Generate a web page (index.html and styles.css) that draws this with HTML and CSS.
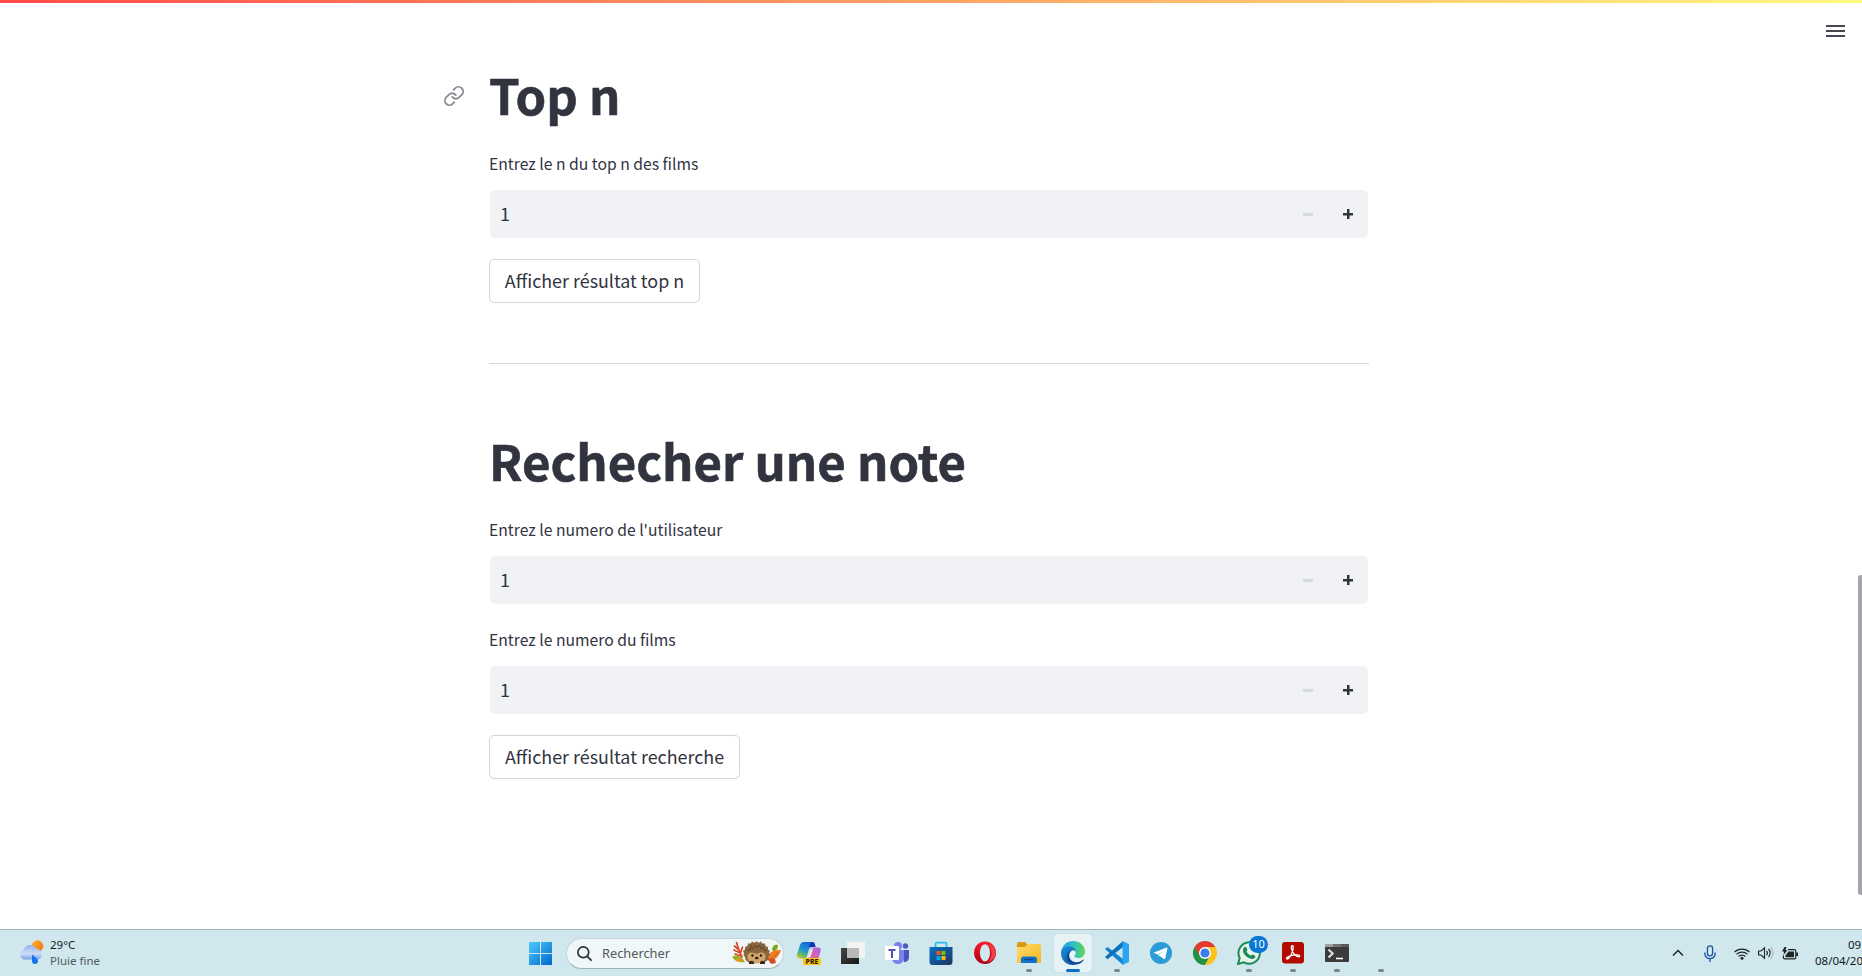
FILE: index.html
```html
<!DOCTYPE html>
<html lang="fr">
<head>
<meta charset="utf-8">
<title>Films</title>
<link rel="stylesheet" href="styles.css">
</head>
<body>
<div class="decoration"></div>
<main class="page">
  <section class="block">
    <h1 class="title">
      <svg class="anchor" viewBox="0 0 24 24" fill="none" stroke="#8b8c94" stroke-width="2" stroke-linecap="round" stroke-linejoin="round"><path d="M10 13a5 5 0 0 0 7.54.54l3-3a5 5 0 0 0-7.07-7.07l-1.72 1.71"/><path d="M14 11a5 5 0 0 0-7.54-.54l-3 3a5 5 0 0 0 7.07 7.07l1.71-1.71"/></svg>
      <span>Top n</span>
    </h1>
    <div class="label"><span>Entrez le n du top n des films</span></div>
    <div class="number"><span class="value">1</span><span class="minus"></span><span class="plus"></span></div>
    <div class="button b-top"><span>Afficher résultat top n</span></div>
  </section>
  <div class="divider"></div>
  <section class="block">
    <h1 class="title"><span>Rechecher une note</span></h1>
    <div class="label"><span>Entrez le numero de l'utilisateur</span></div>
    <div class="number"><span class="value">1</span><span class="minus"></span><span class="plus"></span></div>
    <div class="label second"><span>Entrez le numero du films</span></div>
    <div class="number"><span class="value">1</span><span class="minus"></span><span class="plus"></span></div>
    <div class="button b-search"><span>Afficher résultat recherche</span></div>
  </section>
</main>
<div class="menu"><i></i><i></i><i></i></div>
<div class="scrollbar"></div>

<footer class="taskbar">
  <div class="weather">
    <svg width="25" height="24" viewBox="0 0 25 24">
      <defs>
        <linearGradient id="cloud" x1="0" y1="0" x2="0" y2="1"><stop offset="0" stop-color="#8fb3ea"/><stop offset=".6" stop-color="#cfdcf6"/><stop offset="1" stop-color="#7ba2e6"/></linearGradient>
        <linearGradient id="sun" x1="0" y1="0" x2="1" y2="1"><stop offset="0" stop-color="#ffb52c"/><stop offset="1" stop-color="#f26b15"/></linearGradient>
      </defs>
      <circle cx="18.500" cy="6" r="5.800" fill="url(#sun)"/>
      <path d="M5 19.500A5 5 0 0 1 4.500 10 7 7 0 0 1 17.500 9a5.400 5.400 0 0 1 1.500 10.500z" fill="url(#cloud)"/>
      <path d="M13 14.500c2 2 6 3.800 6 6.500a3 3 0 0 1-6 0z" fill="#1673ea"/>
    </svg>
    <div class="weather-text"><span class="deg">29°C</span><span class="cond">Pluie fine</span></div>
  </div>
  <svg class="start" width="23" height="23" viewBox="0 0 23 23"><defs><linearGradient id="win" x1="0" y1="0" x2="1" y2="1"><stop offset="0" stop-color="#4dcafa"/><stop offset="1" stop-color="#0067cf"/></linearGradient></defs><path fill="url(#win)" d="M0 0h11v11H0zM12 0h11v11H12zM0 12h11v11H0zM12 12h11v11H12z"/></svg>
  <div class="search">
    <svg width="15" height="15" viewBox="0 0 15 15" fill="none" stroke="#2b3033" stroke-width="1.700" stroke-linecap="round"><circle cx="6.300" cy="6.300" r="5.400"/><path d="M10.300 10.300l3.700 3.900"/></svg>
    <span class="search-text">Rechercher</span>
    <svg class="hedgehog" width="50" height="24" viewBox="0 0 50 24">
      <path d="M10 16C8 12 6 7 4.500 1.500M8 12L2 9M7 9L2.500 5M8.500 12l2-6M9 15l-6-2" stroke="#d9482b" stroke-width="1.700" stroke-linecap="round" fill="none"/>
      <path d="M0 16c4-3 8-1 11 2l2 3c-5 1-9 0-13-5z" fill="#9aad24"/><path d="M3 19c4-3 7-1 9 1l-5 1z" fill="#e39a20"/>
      <path d="M40 8c1-4 3-5 6-4 0 4-2 6-5 7z" fill="#84a61f"/><path d="M36 18c0-7 5-9 13-9-2 6-5 10-11 10z" fill="#ee7f25"/><path d="M35 17l8 1 1 4-5 1z" fill="#d54e29"/><path d="M37 20l10-9" stroke="#c85b14" fill="none"/>
      <path d="M12 12l-1-2 2-1.500 0-2.500 2.500-1 .5-2.500 2.700 0 1.300-2 2.500 1.200 2-1.500 2 1.500 2.500-1.200 1.300 2 2.700 0 .5 2.500 2.500 1 0 2.500 2 1.500-1 2 1 2-1.500 2-.5 3-4.500 3H17.500l-4-3-.5-3-1.500-2z" fill="#8a673c"/>
      <path d="M15 9l2.500.5 1-3 2.500 1.500 1.500-3.500 2.500 2 2.500-2L29 8l2.500-1.500 1 3L35 9M18 4l2 1M29 5l2-1" stroke="#5d4023" stroke-width="1" fill="none"/>
      <path d="M15.500 15.500c0-3.500 3.500-5 6.500-3.500 2 1 3 1 5 0 3-1.500 6.500 0 6.500 3.500 0 4.500-3.500 7-9 7s-9-2.500-9-7z" fill="#cfa56a"/>
      <circle cx="20.500" cy="14.500" r="1.200" fill="#2a1c14"/><circle cx="29" cy="14.500" r="1.200" fill="#2a1c14"/><ellipse cx="24.700" cy="17" rx="1.800" ry="1.300" fill="#2a1c14"/><path d="M17 22c0-3 5-3 5 0v1h-5zM28 22c0-3 5-3 5 0v1h-5z" fill="#3c2620"/>
    </svg>
  </div>
  <div class="apps">
    <div class="app"><svg width="24" height="24" viewBox="0 0 24 24">
      <defs><linearGradient id="cp1" x1=".5" y1="0" x2="0" y2="1"><stop offset="0" stop-color="#1763d8"/><stop offset=".45" stop-color="#2099cf"/><stop offset=".75" stop-color="#75bd54"/><stop offset="1" stop-color="#f5c52c"/></linearGradient><linearGradient id="cp2" x1="1" y1="0" x2="0" y2="1"><stop offset="0" stop-color="#a062e8"/><stop offset=".6" stop-color="#e7659c"/><stop offset="1" stop-color="#ff7d64"/></linearGradient></defs>
      <path d="M7 1h8c2 0 2.500 1 3 3l.5 2H15c-2 0-2.700 1-3.300 3L10 15c-.6 2-1.500 2.500-3.500 2.500H3c-3 0-3.500-2-2.700-5L3 4c.7-2 2-3 4-3z" fill="url(#cp1)"/>
      <path d="M14 1h1c2 0 2.500 1 3 3l.5 2H12z" fill="#0c39a7"/>
      <path d="M16 6.500h5c3 0 3 2.500 2.300 5L21 18.500c-.7 2.500-2 4-4 4H9l4-13c.6-2 1.300-3 3-3z" fill="url(#cp2)"/><path d="M14 7.500l-3.500 9h2.700l3-9z" fill="#e9eef5"/></svg><span class="pre">PRE</span></div>
    <div class="app"><svg width="24" height="24" viewBox="0 0 24 24"><defs><linearGradient id="tv" x2="1" y2="1"><stop stop-color="#454545"/><stop offset="1" stop-color="#171717"/></linearGradient></defs><path d="M0 7h18v16H0z" fill="url(#tv)"/><path d="M6 1h18v16H6z" fill="#f1f2f2"/><path d="M6 7h12v10H6z" fill="#b8b8b8"/></svg></div>
    <div class="app"><svg width="24" height="24" viewBox="0 0 24 24"><circle cx="20.500" cy="5" r="2.700" fill="#5059c9"/><path d="M17 9h7v7c0 3-2 5-5 5z" fill="#4c54bf"/><circle cx="13" cy="5" r="4" fill="#7b83eb"/><path d="M7 9h12v8c0 4-3 6-6 6s-6-2-6-6z" fill="#7b83eb"/><path d="M14 6v13H9l-1-1z" fill="#5059c9" opacity=".6"/><rect y="5" width="14" height="14" rx="1.200" fill="#fff"/><path d="M3.500 8h7v2H8v7H6v-7H3.500z" fill="#4d54b7"/></svg></div>
    <div class="app"><svg width="24" height="24" viewBox="0 0 24 24"><defs><linearGradient id="st" x2="1" y2="1"><stop stop-color="#0872c4"/><stop offset="1" stop-color="#1d3560"/></linearGradient></defs><path d="M6.500 6V2.800c0-.7.500-1.200 1.200-1.200h8.600c.7 0 1.200.5 1.200 1.200V6" fill="none" stroke="#2bbdf3" stroke-width="1.800"/><path d="M.5 6h23v15a3 3 0 0 1-3 3h-17a3 3 0 0 1-3-3z" fill="url(#st)"/><path d="M7.500 10h4v4h-4z" fill="#f25022"/><path d="M12.500 10h4v4h-4z" fill="#7fba00"/><path d="M7.500 15h4v4h-4z" fill="#00a4ef"/><path d="M12.500 15h4v4h-4z" fill="#ffb900"/></svg></div>
    <div class="app"><svg width="24" height="24" viewBox="0 0 24 24"><defs><linearGradient id="op" x2="0" y2="1"><stop stop-color="#ff1b2d"/><stop offset="1" stop-color="#a70014"/></linearGradient></defs><path fill-rule="evenodd" d="M12 .5a11 11.300 0 1 0 0 22.600 11 11.300 0 1 0 0-22.600zm0 2.700c3 0 5 4 5 8.600s-2 8.600-5 8.600-5-4-5-8.600 2-8.600 5-8.600z" fill="url(#op)"/><path d="M14 3c3 1 4.500 5 4.500 8.800S17 20 14 21c5-.5 8.500-4 8.500-9.200S19 3.500 14 3z" fill="#f0404c"/></svg></div>
    <div class="app open"><svg width="24" height="24" viewBox="0 0 24 24"><defs><linearGradient id="ex" x2="1" y2="1"><stop stop-color="#ffdc70"/><stop offset="1" stop-color="#f6b719"/></linearGradient></defs><path d="M0 3a2 2 0 0 1 2-2h6l2.500 2.500V8H0z" fill="#db9a0c"/><path d="M0 6h8l3-3h11.500A1.500 1.500 0 0 1 24 4.500V22H0z" fill="url(#ex)"/><path d="M4 22v-4a2.500 2.500 0 0 1 2.500-2.500h11A2.500 2.500 0 0 1 20 18v4z" fill="#1374cc"/><path d="M7 18.500h10" stroke="#0a4d91" stroke-width="1.600"/></svg></div>
    <div class="app active"><svg width="24" height="24" viewBox="0 0 24 24"><defs><linearGradient id="ed1" x1="0" x2="1"><stop stop-color="#249fe1"/><stop offset=".55" stop-color="#32c1bd"/><stop offset="1" stop-color="#5fd850"/></linearGradient><linearGradient id="ed2" x2="1" y2="1"><stop stop-color="#1791df"/><stop offset="1" stop-color="#0c4b9c"/></linearGradient></defs><path d="M.5 10C1.500 4 6 0 12 0c7 0 12 5 12 10.500 0 4-3 6.500-6.500 6.500-2.500 0-4-1-4-2s1.300-1.300 1.300-3.500S12 7.500 9 7.500c-4 0-7 1-8.500 2.500z" fill="url(#ed1)"/><path d="M0 12c0-4 3.500-6.500 8-6.500 4.500 0 7 3 6.800 6-.2-1.500-1.800-2.500-3.500-2-3 1-4.500 4-3.300 7.500 1.300 3.800 5 6 9 5.300-1.500 1-3.500 1.700-5.500 1.700C5 24 0 18.600 0 12z" fill="url(#ed2)"/><path d="M10.500 9.800C7 12 7.500 18.500 12 20.500c4 1.700 8 .2 10.300-2 .4-.3.700 0 .5.500C20.500 22.500 17 24 13 23.500 8 22.500 5 18.500 6 14c.6-2.400 2.300-4 4.500-4.200z" fill="#114a8d"/></svg></div>
    <div class="app open"><svg width="24" height="24" viewBox="0 0 24 24"><path d="M0 8l2.500-2L18 18v6z" fill="#1485d1"/><path d="M0 16l2.500 2.200L18 6V0z" fill="#0a73bd"/><path d="M17.500 0L24 3v18l-6.500 3z" fill="#2ba5ef"/></svg></div>
    <div class="app"><svg width="24" height="24" viewBox="0 0 24 24"><circle cx="12" cy="12" r="11" fill="#2b9cd8"/><path d="M4.500 11.700L17.500 6.500c.7-.2 1 .1.900.8l-2.100 10c-.2.900-.7 1-1.400.6l-6.300-4.500z" fill="#fff"/><path d="M9 13.500l6-4.500-5 5.300-.3 2.700z" fill="#a9c9dd"/></svg></div>
    <div class="app"><svg width="24" height="24" viewBox="0 0 24 24"><path d="M1.600 6A12 12 0 0 0 12 24l5.200-9z" fill="#229342"/><path d="M12 24A12 12 0 0 0 22.400 6H12l5.200 9z" fill="#fcc31e"/><path d="M12 6h10.400A12 12 0 0 0 1.600 6l5.200 9z" fill="#e33b2e"/><circle cx="12" cy="12" r="6" fill="#fff"/><circle cx="12" cy="12" r="4.600" fill="#3a7df0"/></svg></div>
    <div class="app open"><svg width="24" height="24" viewBox="0 0 24 24"><path d="M1 23l1.700-6A10.700 10.700 0 1 1 7 21.400z" fill="#e6f2ed" stroke="#188c54" stroke-width="2"/><path d="M7 6.500c1-1 2-.8 2.500.2l.8 2c.2.600-.9 1.500-.7 2 1 1.900 2.300 3 4.200 3.800.6.200 1.200-1.200 1.900-1l2.300 1.200c.6.300.3 1.700-.4 2.400-1.500 1.300-3.800 1-6.300-.3-2.700-1.500-5-4.300-5.300-6.900-.1-1.300.3-2.600 1-3.400z" fill="#188c54"/></svg><span class="badge">10</span></div>
    <div class="app open"><svg width="24" height="24" viewBox="0 0 24 24"><rect x="1" y="1" width="22" height="21.500" rx="3.200" fill="#b30b00"/><path d="M5.700 17.800c-1.500-1.800 5.500-4 10.500-3.900 2.300.1 2.900 1 2 1.800-1.500 1-6.900-3.200-7.700-7.700-.3-2.300-.1-3.400.9-3.400 1.400.1.900 4.700-.9 8.400-1.700 3.400-3.800 5.700-4.800 4.800z" fill="none" stroke="#fff" stroke-width="1.300"/></svg></div>
    <div class="app open"><svg width="24" height="24" viewBox="0 0 24 24"><rect y="3" width="24" height="18" rx="1" fill="#3b3b3b"/><path d="M0 3h8v3H0z" fill="#a0a0a0"/><path d="M8 3h8v3H8z" fill="#737373"/><path d="M16 3h8v3h-8z" fill="#5a5a5a"/><path d="M3.500 8.500l4.200 4-4.200 4" stroke="#ddd" stroke-width="2.200" fill="none"/><path d="M11 17.500h7" stroke="#fff" stroke-width="1.600"/></svg></div>
    <div class="app open"></div>
  </div>
  <div class="tray">
    <svg class="chev" width="12" height="8" viewBox="0 0 12 8" fill="none" stroke="#202425" stroke-width="1.500"><path d="M1 6.500l5-5 5 5"/></svg>
    <svg class="mic" width="12" height="17" viewBox="0 0 12 17" fill="none" stroke="#1d55a5" stroke-width="1.300"><rect x="3.400" y=".8" width="5.200" height="10" rx="2.600"/><path d="M.8 7.500v1a5.200 5.200 0 0 0 10.400 0v-1M6 13.700V17"/></svg>
    <svg class="wifi" width="16" height="13" viewBox="0 0 16 13" fill="none" stroke="#202425" stroke-width="1.200"><path d="M.5 5.200a10.500 10.500 0 0 1 15 0M2.500 7.400a7.700 7.700 0 0 1 11 0M4.600 9.500a4.800 4.800 0 0 1 6.800 0"/><circle cx="8" cy="11.300" r="1.500" fill="#202425" stroke="none"/></svg>
    <svg class="vol" width="16" height="14" viewBox="0 0 16 14" fill="none" stroke="#202425" stroke-width="1.100"><path d="M.6 5h2.500L6.500 1.800v10.400L3.100 9H.6z"/><path d="M8.500 4.800a3.300 3.300 0 0 1 0 4.400M10.500 3a5.700 5.700 0 0 1 0 8"/><path d="M12.600 1a8.500 8.500 0 0 1 0 12" stroke="#a6b5b9"/></svg>
    <svg class="bat" width="16" height="13" viewBox="0 0 16 13"><path d="M6 2.700h6.500a1.300 1.300 0 0 1 1.300 1.300v6.500a1.300 1.300 0 0 1-1.300 1.300H2.700a1.300 1.300 0 0 1-1.300-1.300V8.500" fill="none" stroke="#202425" stroke-width="1.200"/><path d="M6.500 4.500H12v5.700H3.500V8.500zM14.200 5.500H16V9h-1.800zM2.500 0L0 4.500h2L1.500 8 5.500 3.200H3.500L4.500 0z" fill="#202425"/></svg>
    <div class="clock"><span class="hour">09</span><span class="date">08/04/20</span></div>
  </div>
</footer>
</body>
</html>
```
FILE: styles.css
```css
* { box-sizing: border-box; }
body {
  margin: 0;
  width: 1862px;
  height: 976px;
  overflow: hidden;
  background: #fff;
  color: #31333f;
  font-family: "Noto Sans CJK JP", "Noto Sans", sans-serif;
  display: flex;
  flex-direction: column;
}
span { white-space: nowrap; }
.decoration { height: 3px; flex: none; background: linear-gradient(90deg, #ff4b4b 0, #fffd80 1900px); }

.page { width: 880px; margin-left: 489px; flex: 1; min-height: 0; padding-top: 58px; }
.block { display: flex; flex-direction: column; }
.title { position: relative; margin: 0; height: 66px; line-height: 66px; font-size: 49.100px; font-weight: 700; -webkit-text-stroke: .6px #31333f; }
.title span { display: inline-block; }
.anchor { position: absolute; left: -46px; top: 24px; width: 22px; height: 22px; }
.label { margin-top: 24px; height: 26px; line-height: 26px; font-size: 15.700px; }
.label.second { margin-top: 23px; }
.number {
  margin: 13px 1px 0;
  height: 48px;
  border-radius: 5px;
  background: #f0f2f6;
  display: flex;
  align-items: center;
  padding: 0 15px 0 10px;
  font-size: 18px;
}
.value { flex: 1; line-height: 46px; height: 48px; }
.minus { width: 10px; height: 3px; background: #d5d9e2; margin-right: 30px; }
.plus { width: 10px; height: 10px; background: linear-gradient(#31333f, #31333f) center / 10px 2.500px no-repeat, linear-gradient(#31333f, #31333f) center / 2.500px 10px no-repeat; }
.button {
  margin-top: 21px;
  height: 44px;
  border: 1px solid #d3d4d8;
  border-radius: 5px;
  display: flex;
  align-items: center;
  justify-content: center;
  padding-bottom: 2px;
  font-size: 17.900px;
  line-height: 26px;
}
.b-top { width: 211px; }
.b-search { width: 251px; }
.divider { height: 1px; background: #d6d6d9; margin: 60px 0 63px; }

.menu { position: absolute; left: 1826px; top: 25px; width: 19px; display: grid; gap: 3px; }
.menu i { height: 2px; background: #454752; }
.scrollbar { position: absolute; right: 0; top: 575px; width: 4px; height: 320px; background: #a5a5a9; border-radius: 3px 0 0 3px; }

.taskbar {
  flex: none;
  height: 47px;
  border-top: 1px solid #a5b2b6;
  background: #cfe7ed;
  display: flex;
  align-items: center;
  font-family: "Noto Sans", sans-serif;
  font-size: 11.500px;
  color: #14191b;
}
.weather { width: 510px; padding-left: 19px; display: flex; align-items: center; gap: 6px; }
.weather svg { margin-top: -3px; }
.weather-text { display: flex; flex-direction: column; line-height: 16px; }
.cond { color: #4f5b5e; }
.start { margin-left: 19px; flex: none; }
.search {
  margin-left: 14px;
  width: 218px;
  height: 31px;
  flex: none;
  border-radius: 16px;
  background: #f0f7f9;
  border: 1px solid #c3d5da;
  border-bottom-color: #9fb2b8;
  display: flex;
  align-items: center;
  padding-left: 10px;
}
.search-text { width: 130px; margin-left: 10px; font-size: 12.800px; color: #53595b; }
.apps { display: flex; margin-left: 3px; }
.app { position: relative; width: 44px; height: 46px; display: flex; align-items: center; justify-content: center; flex: none; }
.app svg { position: relative; }
.app.active::before { content: ""; position: absolute; left: 3px; top: 4px; width: 38px; height: 38px; border-radius: 4px; background: #e6f2f6; box-shadow: 0 0 1px #a9bcc2; }
.app.open::after, .app.active::after { content: ""; position: absolute; left: 19px; top: 39px; width: 6px; height: 3px; border-radius: 2px; background: #788689; }
.app.active::after { left: 15px; width: 14px; background: #0a70c8; }
.pre { position: absolute; left: 16px; top: 28px; width: 18px; height: 7px; border-radius: 2px; background: #ffc50d; color: #25200a; font-size: 7px; line-height: 7px; font-weight: 800; text-align: center; }
.badge { position: absolute; left: 22px; top: 6px; width: 19px; height: 17px; border-radius: 9px; background: #0878d4; color: #fff; font-size: 11px; line-height: 16px; text-align: center; }
.tray { flex: 1; height: 46px; display: flex; align-items: center; min-width: 0; overflow: hidden; padding-left: 269px; }
.tray svg { flex: none; }
.mic { margin-left: 20px; }
.wifi { margin-left: 18px; }
.vol { margin-left: 8px; }
.bat { margin-left: 8px; }
.clock { margin-left: 17px; width: 47px; flex: none; overflow: hidden; line-height: 16px; display: flex; flex-direction: column; }
.hour { padding-left: 33px; }
```
